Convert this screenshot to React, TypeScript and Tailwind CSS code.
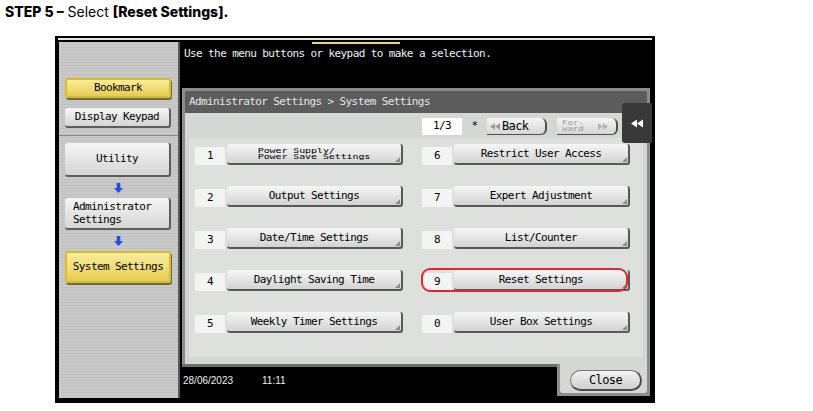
import React from "react";

const mono = "font-['DejaVu_Sans_Mono',monospace] text-[11px] tracking-[-0.6px]";

function DownArrow() {
  return (
    <svg width="9" height="10" viewBox="0 0 10 11">
      <path d="M3 0h4v5.5h3l-5 5.5l-5-5.5h3z" fill="#1d4fe3" />
    </svg>
  );
}

function DoubleLeft({ color, w = 11, h = 8 }: { color: string; w?: number; h?: number }) {
  return (
    <svg width={w} height={h} viewBox="0 0 12 8">
      <path d="M6 0v8L0 4z M12 0v8L6 4z" fill={color} />
    </svg>
  );
}

function DoubleRight({ color }: { color: string }) {
  return (
    <svg width="10" height="7" viewBox="0 0 12 8">
      <path d="M0 0v8l6-4z M6 0v8l6-4z" fill={color} />
    </svg>
  );
}

function Corner() {
  return (
    <div className="absolute right-[1px] bottom-[1px] w-[5px] h-[5px] bg-[#8d8d8d] [clip-path:polygon(100%_0,100%_100%,0_100%)]" />
  );
}

function MenuBtn({ label, two }: { label: string; two?: [string, string] }) {
  return (
    <div className="relative w-[176px] h-[21px] rounded-[3px] bg-gradient-to-b from-[#f7f7f7] to-[#d3d3d3] border-r-2 border-b-2 border-[#585858] flex items-center justify-center text-black">
      {two ? (
        <div className="font-['DejaVu_Sans_Mono',monospace] text-[10px] leading-[10px] tracking-[-0.1px] flex flex-col items-start scale-y-[0.68]">
          <span>{two[0]}</span>
          <span>{two[1]}</span>
        </div>
      ) : (
        <span className={`${mono} leading-[14px]`}>{label}</span>
      )}
      <Corner />
    </div>
  );
}

function Row({ n, label, two, highlight }: { n: string; label: string; two?: [string, string]; highlight?: boolean }) {
  return (
    <div className="relative flex items-end gap-[2px]">
      <div className={`w-[30px] h-[18px] bg-[#f4f4f4] flex items-center justify-center text-black ${mono}`}>{n}</div>
      <MenuBtn label={label} two={two} />
      {highlight && (
        <div className="absolute left-[-1px] top-[-2px] w-[207px] h-[24px] rounded-[9px] border-2 border-[#e3262e]" />
      )}
    </div>
  );
}

function SideBtn({ children, yellow, h, left }: { children: React.ReactNode; yellow?: boolean; h: number; left?: boolean }) {
  return (
    <div
      className={`ml-[6px] w-[106px] rounded-[3px] flex items-center ${left ? "justify-start pl-[8px]" : "justify-center"} text-black ${mono} leading-[12px] ${
        yellow
          ? "bg-gradient-to-b from-[#f8ed9c] to-[#e6cd4e] border-2 border-[#d9bb2c] shadow-[1px_2px_0_#6d6a4a]"
          : "bg-gradient-to-b from-[#f6f6f6] to-[#d5d5d5] border-r-2 border-b-2 border-[#5d5d5d]"
      }`}
      style={{ height: h }}
    >
      {children}
    </div>
  );
}

export default function App() {
  return (
    <div className="w-[813px] h-[411px] bg-white overflow-hidden">
      <div className="pl-[5px] pt-[3px] h-[21px] text-[14px] leading-[18px] text-black font-['Inter',sans-serif]">
        <span className="font-extrabold">STEP 5 –</span> <span>Select</span>{" "}
        <span className="font-extrabold">[Reset Settings].</span>
      </div>

      <div className="mt-[15px] ml-[55px] w-[600px] h-[367px] bg-black flex flex-col pt-[2px]">
        <div className="h-[2px] mx-[3px] bg-[#e4e4e4]" />
        <div className="h-[2px]" />
        <div className="flex h-[356px] pl-[4px]">
          {/* Left panel */}
          <div className="w-[119px] h-full flex flex-col bg-[repeating-linear-gradient(to_bottom,#c9c9c9_0px,#c9c9c9_2px,#c0c0c0_2px,#c0c0c0_3px)]">
            <div className="h-[36px]" />
            <SideBtn yellow h={20}>Bookmark</SideBtn>
            <div className="h-[10px]" />
            <SideBtn h={20}>Display Keypad</SideBtn>
            <div className="h-[7px]" />
            <div className="h-px bg-[#8a8a8a]" />
            <div className="h-[7px]" />
            <SideBtn h={34}>Utility</SideBtn>
            <div className="h-[21px] ml-[6px] w-[106px] flex items-center justify-center">
              <DownArrow />
            </div>
            <SideBtn h={32} left>
              <div className="flex flex-col leading-[13px]">
                <span>Administrator</span>
                <span>Settings</span>
              </div>
            </SideBtn>
            <div className="h-[21px] ml-[6px] w-[106px] flex items-center justify-center">
              <DownArrow />
            </div>
            <SideBtn yellow h={32}>System Settings</SideBtn>
          </div>
          <div className="w-[2px] h-full bg-[#5a5a5a]" />

          {/* Main area */}
          <div className="relative w-[472px] h-full flex flex-col">
            <div className="h-[2px] flex">
              <div className="ml-[132px] w-[88px] h-[2px] bg-[#e9d978]" />
            </div>
            <div className={`pl-[4px] pt-[3px] h-[44px] text-[#f2f2f2] ${mono} leading-[14px]`}>
              Use the menu buttons or keypad to make a selection.
            </div>

            <div className="mx-[2px] flex flex-col">
              <div className="bg-[#8d8d8d] px-[3px] pt-[3px] flex flex-col">
                <div className="h-[22px] bg-[#5c5c5c] rounded-t-[2px] pl-[4px] flex items-center">
                  <span className={`${mono} text-[#e6e6e6]`}>Administrator Settings &gt; System Settings</span>
                </div>
                <div className="h-[251px] bg-[#d4d8d4] flex flex-col">
                  <div className="pt-[5px] h-[22px] flex justify-end pr-[29px]">
                    <div className={`w-[40px] h-[17px] bg-white flex items-center justify-center text-black ${mono}`}>1/3</div>
                    <div className={`w-[25px] h-[17px] flex items-center justify-center text-black ${mono}`}>*</div>
                    <div className="w-[60px] h-[17px] rounded-r-[6px] bg-gradient-to-b from-[#f4f4f4] to-[#d6d6d6] border-r-2 border-b border-[#4f4f4f] flex items-center pl-[3px] gap-[2px]">
                      <DoubleLeft color="#9a9a9a" w={10} h={7} />
                      <span className={`${mono} text-black text-[12px]`}>Back</span>
                    </div>
                    <div className="w-[10px]" />
                    <div className="w-[61px] h-[17px] rounded-r-[6px] bg-gradient-to-b from-[#f4f4f4] to-[#d6d6d6] border-r-2 border-b border-[#4f4f4f] flex items-center pl-[5px] justify-between pr-[8px]">
                      <div className="font-['DejaVu_Sans_Mono',monospace] text-[9px] leading-[9px] text-[#9a9a9a] flex flex-col scale-y-[0.72]">
                        <span>For-</span>
                        <span>ward</span>
                      </div>
                      <DoubleRight color="#b0b0b0" />
                    </div>
                  </div>

                  <div className="mt-[3px] mx-[4px] h-[219px] rounded-[3px] bg-[#dde0dc] pl-[6px] pt-[6px] flex gap-[19px]">
                    <div className="flex flex-col gap-[21px]">
                      <Row n="1" label="" two={["Power Supply/", "Power Save Settings"]} />
                      <Row n="2" label="Output Settings" />
                      <Row n="3" label="Date/Time Settings" />
                      <Row n="4" label="Daylight Saving Time" />
                      <Row n="5" label="Weekly Timer Settings" />
                    </div>
                    <div className="flex flex-col gap-[21px]">
                      <Row n="6" label="Restrict User Access" />
                      <Row n="7" label="Expert Adjustment" />
                      <Row n="8" label="List/Counter" />
                      <Row n="9" label="Reset Settings" highlight />
                      <Row n="0" label="User Box Settings" />
                    </div>
                  </div>
                </div>
              </div>

              <div className="flex">
                <div className="flex-1 flex flex-col">
                  <div className="h-[3px] bg-[#6e6e6e]" />
                  <div className="pt-[7px] pl-[1px] flex text-[10px] leading-[14px] text-[#efefef] font-['Liberation_Sans',sans-serif]">
                    <span className="w-[79px]">28/06/2023</span>
                    <span>11:11</span>
                  </div>
                </div>
                <div className="w-[93px] h-[32px] bg-[#8d8d8d] px-[3px] pb-[3px]">
                  <div className="h-full bg-[#d4d8d4] rounded-b-[3px] pt-[6px] pl-[10px]">
                    <div className="w-[72px] h-[21px] rounded-full bg-gradient-to-b from-[#f2f2f2] to-[#cfcfcf] border border-[#777] border-r-2 border-b-2 border-r-[#4c4c4c] border-b-[#4c4c4c] flex items-center justify-center">
                      <span className={`${mono} text-black text-[12px]`}>Close</span>
                    </div>
                  </div>
                </div>
              </div>
            </div>

            {/* side tab */}
            <div className="absolute left-[442px] top-[61px] w-[30px] h-[40px] bg-[#393939] rounded-l-[3px] flex items-center justify-center">
              <DoubleLeft color="#ffffff" w={12} h={9} />
            </div>
          </div>
        </div>
      </div>
    </div>
  );
}
